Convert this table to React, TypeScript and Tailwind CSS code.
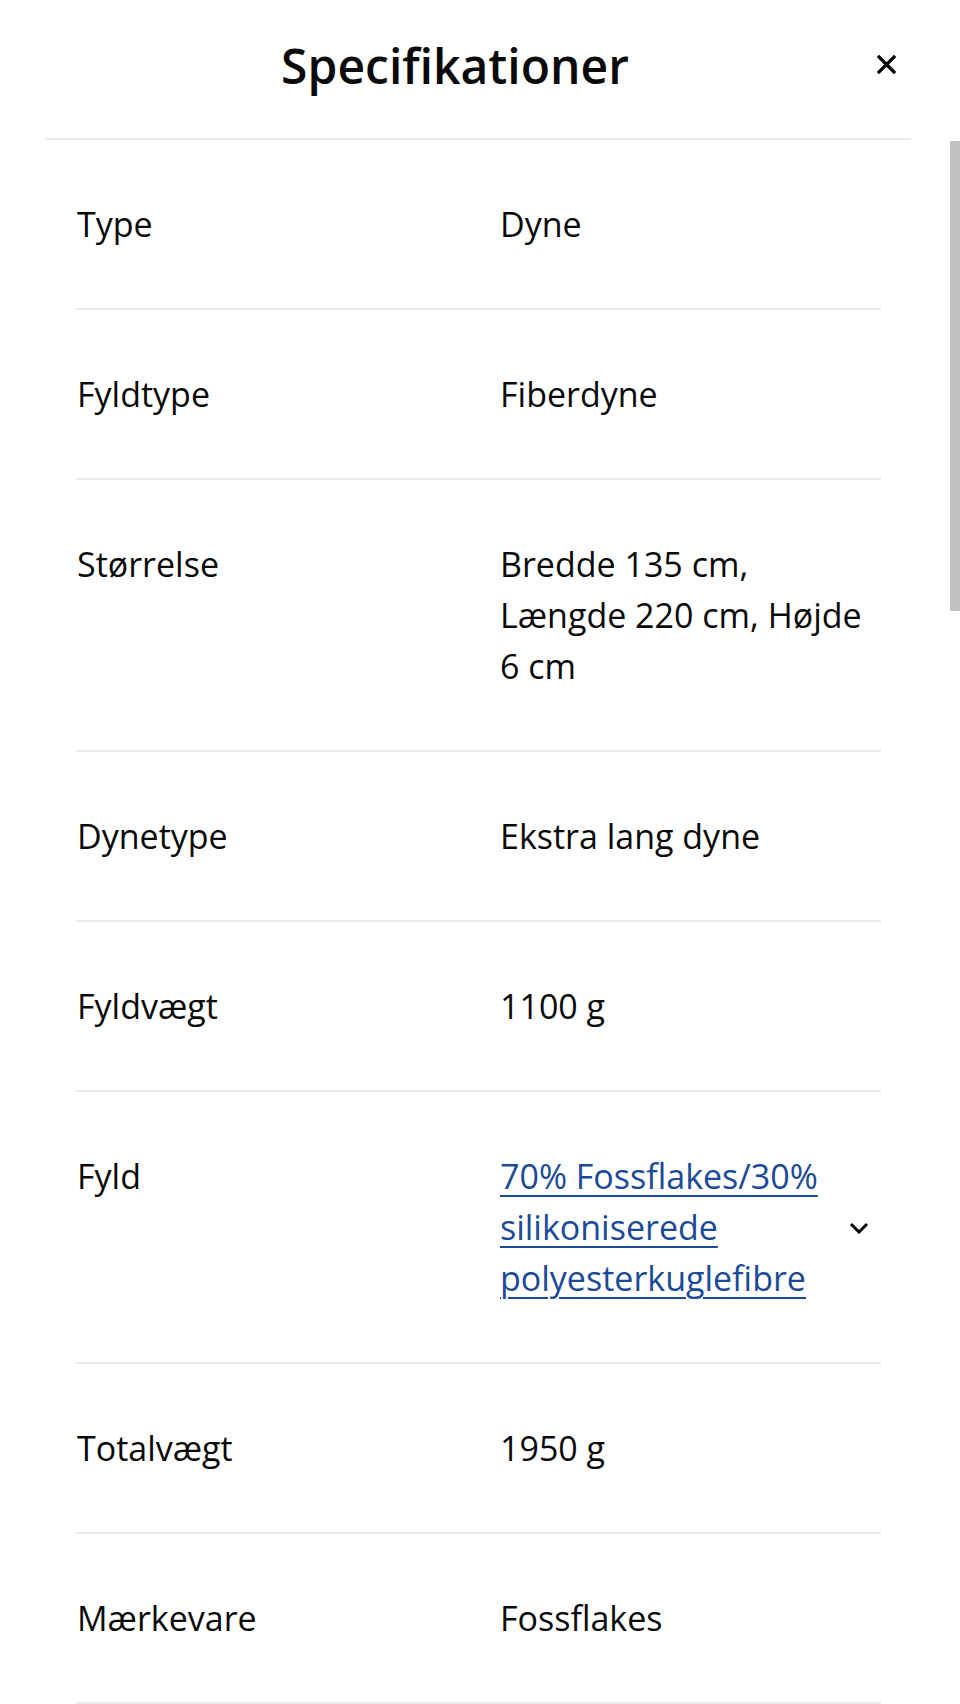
import React from 'react';

interface SpecRow {
  label: string;
  value: string;
  link?: boolean;
}

const rows: SpecRow[] = [
  { label: 'Type', value: 'Dyne' },
  { label: 'Fyldtype', value: 'Fiberdyne' },
  { label: 'Størrelse', value: 'Bredde 135 cm, Længde 220 cm, Højde 6 cm' },
  { label: 'Dynetype', value: 'Ekstra lang dyne' },
  { label: 'Fyldvægt', value: '1100 g' },
  { label: 'Fyld', value: '70% Fossflakes/30% silikoniserede polyesterkuglefibre', link: true },
  { label: 'Totalvægt', value: '1950 g' },
  { label: 'Mærkevare', value: 'Fossflakes' },
];

const CloseIcon = () => (
  <svg width="19" height="19" viewBox="0 0 19 19" fill="none">
    <path d="M2 2L17 17M17 2L2 17" stroke="#000" strokeWidth="3.2" strokeLinecap="square" />
  </svg>
);

const Chevron = () => (
  <svg width="20" height="12" viewBox="0 0 20 12" fill="none">
    <path d="M2 2L10 10L18 2" stroke="#000" strokeWidth="3" />
  </svg>
);

export default function App() {
  return (
    <div className="relative w-[960px] min-h-[1704px] bg-white text-[#0a0a0a] font-['Open_Sans',sans-serif]">
      <div className="relative h-[138px] flex items-center justify-center pb-[6px] pr-[50px]">
        <h2 className="text-[48px] font-semibold leading-none">Specifikationer</h2>
        <button className="absolute right-[64px] top-[55px] p-0">
          <CloseIcon />
        </button>
      </div>
      <div className="ml-[46px] mr-[49px] h-[2px] bg-[#e8e8e8]" />

      <div className="absolute right-0 top-[141px] w-[10px] h-[470px] bg-[#c1c1c1]" />

      <div className="ml-[76px] w-[805px]">
        {rows.map((row) => (
          <div
            key={row.label}
            className="grid grid-cols-[424px_1fr] pt-[59px] pb-[58px] border-b-2 border-[#e8e8e8] text-[34px] leading-[51px]"
          >
            <div className="pl-[1px]">{row.label}</div>
            {row.link ? (
              <div className="flex items-center justify-between">
                <a href="#" className="max-w-[345px] text-[#1b4a98] underline decoration-2 underline-offset-[6px]">
                  {row.value}
                </a>
                <span className="mr-[12px] flex">
                  <Chevron />
                </span>
              </div>
            ) : (
              <div className="w-[368px]">{row.value}</div>
            )}
          </div>
        ))}
      </div>
    </div>
  );
}
